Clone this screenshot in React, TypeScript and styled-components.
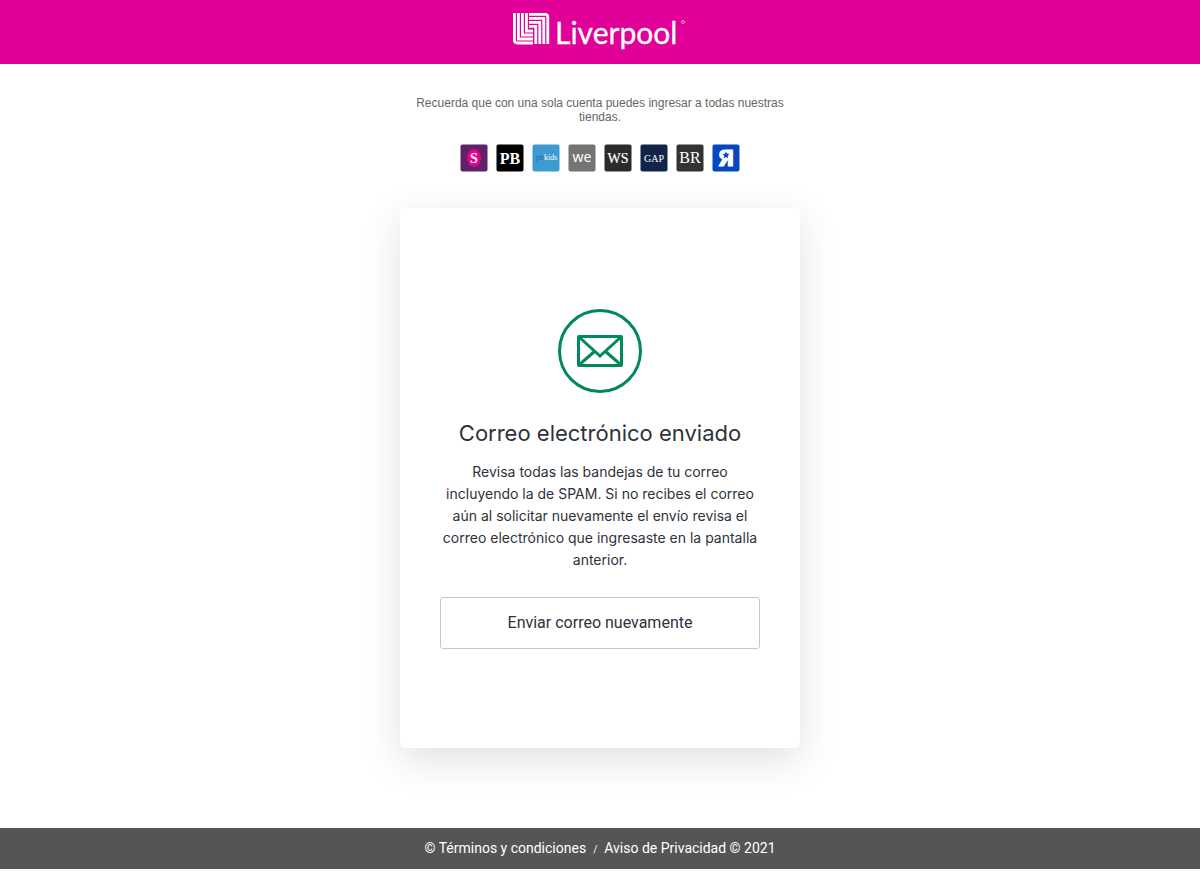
import React from "react";
import styled, { createGlobalStyle } from "styled-components";

const GlobalStyle = createGlobalStyle`
  *, *::before, *::after { box-sizing: border-box; }
  body {
    margin: 0;
    background: #fff;
    font-family: Inter, Roboto, sans-serif;
    color: #2d333a;
  }
`;

const Header = styled.header`
  display: flex;
  justify-content: center;
  background: #e10098;
  height: 64px;
`;

const Main = styled.main`
  display: flex;
  flex-direction: column;
  align-items: center;
  padding: 32px 16px 80px;
`;

const Reminder = styled.p`
  max-width: 400px;
  margin: 0 0 20px;
  color: #666;
  font: 12px/14px "Liberation Sans", Arial, sans-serif;
  text-align: center;
`;

const Stores = styled.ul`
  display: flex;
  gap: 8px;
  margin: 0 0 36px;
  padding: 0;
  list-style: none;
`;

const Store = styled.li`
  display: flex;
`;

const Card = styled.section`
  display: flex;
  flex-direction: column;
  align-items: center;
  justify-content: center;
  width: 100%;
  max-width: 400px;
  min-height: 540px;
  padding: 42px 40px 40px;
  border-radius: 5px;
  background: #fff;
  box-shadow: 0 12px 40px rgba(0, 0, 0, 0.12);
  text-align: center;
`;

const Title = styled.h1`
  margin: 24px 0 12px;
  font-size: 22px;
  font-weight: 400;
  line-height: 32px;
`;

const Message = styled.p`
  margin: 0 0 26px;
  font-size: 14px;
  line-height: 22px;
`;

const ResendButton = styled.button`
  width: 100%;
  height: 52px;
  border: 1px solid #c2c8d0;
  border-radius: 3px;
  background: #fff;
  color: #2d333a;
  font: 16px/24px Roboto, sans-serif;
  cursor: pointer;
`;

const Footer = styled.footer`
  display: flex;
  justify-content: center;
  align-items: baseline;
  gap: 7px;
  padding: 10px 16px 11px;
  background: #555;
  color: #fff;
  font: 14px/20px Roboto, sans-serif;
`;

const FooterLink = styled.a`
  color: inherit;
  text-decoration: none;
`;

const Slash = styled.span`
  font-size: 10px;
  line-height: 10px;
`;

function LiverpoolLogo() {
  return (
    <svg width="180" height="64" viewBox="510 0 180 64" role="img" aria-label="Liverpool">
      <g fill="none" stroke="#fff" strokeWidth="2.8">
        <path d="M514.400 13V40Q514.400 43 517.400 43H533M518.400 13V39H533M522.400 13V35H533M526.400 13V31H533" />
        <path d="M529 14.400H545Q547.800 14.400 547.800 17V44M529 18.400H543.800V44M529 22.400H539.800V44M529 26.400H535.800V44" />
      </g>
      <text
        x="555"
        y="44"
        fill="#fff"
        stroke="#fff"
        strokeWidth=".3"
        fontFamily="Lato, sans-serif"
        fontSize="30"
      >
        Liverpool
      </text>
      <circle cx="683" cy="22" r="1.500" fill="none" stroke="#fff" strokeOpacity=".6" />
    </svg>
  );
}

type Brand = {
  name: string;
  bg: string;
  label: string;
  size: number;
  y: number;
  font?: string;
  bold?: boolean;
  outline?: number;
};

const serif = '"Liberation Serif", serif';

const brands: Brand[] = [
  { name: "Suburbia", bg: "#5f2167", label: "S", size: 14, y: 19, bold: true },
  { name: "Pottery Barn", bg: "#000", label: "PB", size: 16, y: 20, bold: true },
  { name: "Pottery Barn Kids", bg: "#3d9bd2", label: "", size: 8, y: 16 },
  { name: "West Elm", bg: "#757472", label: "we", size: 14, y: 18, font: '"Noto Sans", sans-serif' },
  { name: "Williams Sonoma", bg: "#2b2b2b", label: "WS", size: 14, y: 19, outline: 0.2 },
  { name: "Gap", bg: "#12244a", label: "GAP", size: 10, y: 18 },
  { name: "Banana Republic", bg: "#333", label: "BR", size: 16, y: 19 },
  {
    name: "Toys R Us",
    bg: "#0649bf",
    label: "Я",
    size: 22,
    y: 22,
    font: '"DejaVu Sans", sans-serif',
    bold: true,
    outline: 1,
  },
];

function BrandTile({ brand }: { brand: Brand }) {
  return (
    <svg width="28" height="28" viewBox="0 0 28 28" role="img" aria-label={brand.name}>
      <rect x=".5" y=".5" width="27" height="27" rx="2" fill={brand.bg} />
      {brand.name === "Suburbia" && <ellipse cx="14" cy="14" rx="7" ry="9" fill="#e6008c" />}
      {brand.name === "Pottery Barn Kids" && (
        <text x="4" y="16" fontFamily={serif} fontSize="8" fill="#1d6fa5">
          pb<tspan fill="#fff">kids</tspan>
        </text>
      )}
      {brand.label && (
        <text
          x="14"
          y={brand.y}
          fill="#fff"
          stroke={brand.outline ? "#fff" : "none"}
          strokeWidth={brand.outline}
          strokeLinejoin="round"
          textAnchor="middle"
          fontFamily={brand.font ?? serif}
          fontSize={brand.size}
          fontWeight={brand.bold ? 700 : 400}
        >
          {brand.label}
        </text>
      )}
      {brand.name === "Toys R Us" && (
        <path
          d="M14 7.500l1 2.300 2.500.3-1.900 1.700.5 2.500-2.100-1.300-2.100 1.300.5-2.500-1.900-1.700 2.500-.3z"
          fill={brand.bg}
        />
      )}
    </svg>
  );
}

function MailIcon() {
  return (
    <svg width="84" height="84" viewBox="0 0 84 84" fill="none" stroke="#008a58" strokeWidth="3" aria-hidden="true">
      <circle cx="42" cy="42" r="40.500" />
      <rect x="20.500" y="27.500" width="43" height="29" rx=".5" />
      <path d="M21 28l21 19 21-19M21 56l16-14M63 56L47 42" />
    </svg>
  );
}

export default function App() {
  return (
    <>
      <GlobalStyle />
      <Header>
        <LiverpoolLogo />
      </Header>
      <Main>
        <Reminder>Recuerda que con una sola cuenta puedes ingresar a todas nuestras tiendas.</Reminder>
        <Stores>
          {brands.map((brand) => (
            <Store key={brand.name}>
              <BrandTile brand={brand} />
            </Store>
          ))}
        </Stores>
        <Card>
          <MailIcon />
          <Title>Correo electrónico enviado</Title>
          <Message>
            Revisa todas las bandejas de tu correo incluyendo la de SPAM. Si no recibes el correo aún al solicitar
            nuevamente el envío revisa el correo electrónico que ingresaste en la pantalla anterior.
          </Message>
          <ResendButton type="button">Enviar correo nuevamente</ResendButton>
        </Card>
      </Main>
      <Footer>
        <FooterLink href="#terminos">© Términos y condiciones</FooterLink>
        <Slash>/</Slash>
        <FooterLink href="#privacidad">Aviso de Privacidad © 2021</FooterLink>
      </Footer>
    </>
  );
}
